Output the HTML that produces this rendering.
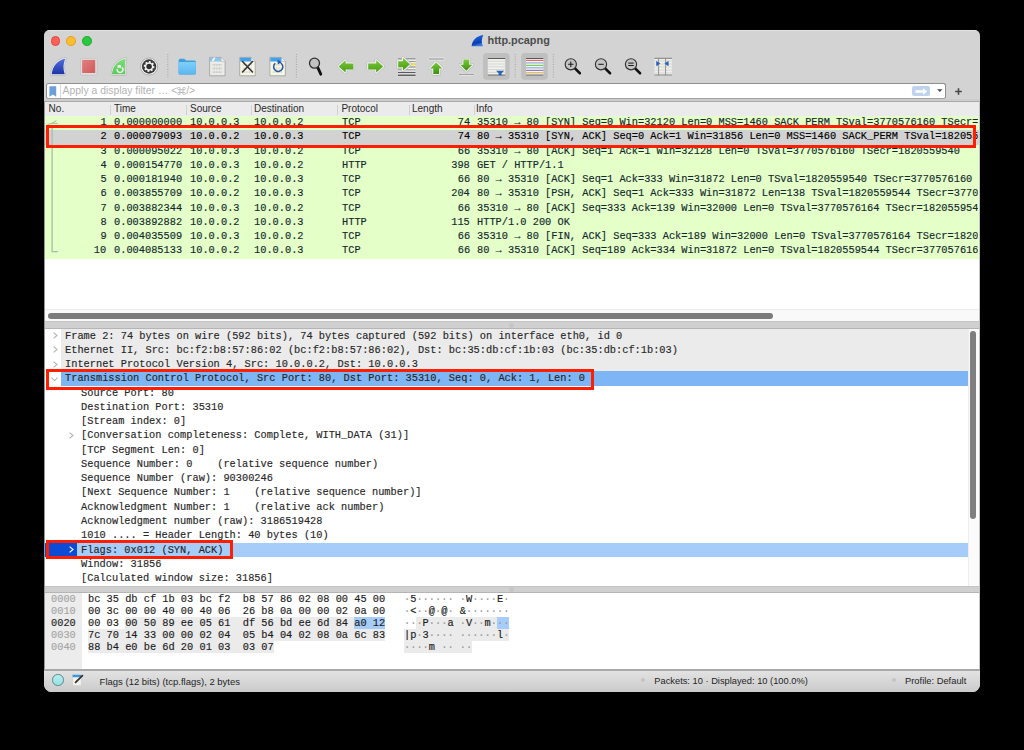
<!DOCTYPE html><html><head><meta charset="utf-8"><style>
*{margin:0;padding:0;box-sizing:border-box}
html,body{width:1024px;height:750px;background:#000;overflow:hidden}
body{position:relative;font-family:"Liberation Sans",sans-serif}
.abs{position:absolute}
#win{position:absolute;left:44px;top:30px;width:936px;height:661.5px;background:#d3d3d3;border-radius:5.5px 5.5px 7.5px 7.5px;overflow:hidden}
.mono{font-family:"Liberation Mono",monospace;font-size:11px;white-space:pre;-webkit-text-stroke-width:0.15px}
.mono span{transform:scaleX(.9379);transform-origin:0 0}
.mono span.r{transform-origin:100% 0}
.tl{position:absolute;width:9.6px;height:9.6px;border-radius:50%}
#filter{position:absolute;left:2px;top:53.2px;width:899.5px;height:15.8px;background:#fff;border:1px solid #8f8f8f;border-bottom-color:#a3a3a3;border-radius:2.5px}
#plist{position:absolute;left:0;top:71px;width:936px;height:220px;background:#fff;overflow:hidden}
#phdr{position:absolute;left:0;top:0;width:936px;height:15px;background:#ebebeb;font-size:10px;color:#2a2a2a;border-top:1px solid #a9a9a9}
#phdr span{position:absolute;top:1.3px}
#phdr i{position:absolute;top:2.5px;width:1px;height:10px;background:#d2d2d2}
.prow{position:absolute;left:0;width:936px;height:14.27px;background:#e4ffc7;color:#12272e;line-height:13.64px}
.prow span{position:absolute;top:0}
.sel{background:#d2d2d2;color:#000}
#details{position:absolute;left:0;top:298.5px;width:936px;height:257.5px;background:#fff;overflow:hidden}
.drow{position:absolute;left:0;width:923.7px;height:14.27px;line-height:14.94px;color:#262626}
.drow span{position:absolute;top:0}
.arr{position:absolute;top:0}
#hex{position:absolute;left:0;top:562.5px;width:936px;height:76.5px;background:#fff;overflow:hidden}
.hrow{position:absolute;left:0;width:936px;height:11.95px;line-height:13.64px;color:#1a1a1a}
.hrow span{position:absolute;top:0}
#status{position:absolute;left:0;top:639px;width:936px;height:22.5px;background:linear-gradient(#e2e2e2,#cbcbcb);border-top:2px solid #a9a9a9;font-size:9.35px;color:#1e1e1e}
.redbox{position:absolute;border:3.5px solid #ff1e00;border-left-width:3.1px;border-right-width:3.1px}
.splitter{position:absolute;left:0;width:936px;background:#d0d0d0;border-top:1px solid #c4c4c4;border-bottom:1px solid #b5b5b5}
</style></head><body>
<div id="win">
<div class="tl" style="left:6.7px;top:6.2px;background:#fe5f57;border:0.5px solid #e2463f"></div>
<div class="tl" style="left:22.4px;top:6.2px;background:#febc2e;border:0.5px solid #e1a116"></div>
<div class="tl" style="left:38.2px;top:6.2px;background:#28c840;border:0.5px solid #1aab29"></div>
<div class="abs" style="left:443.5px;top:3.5px;font-size:10.9px;font-weight:bold;color:#4d4d4d;letter-spacing:0px">http.pcapng</div>
<div id="filter"><div class="abs" style="left:12.5px;top:0;width:1px;height:13.8px;background:#d9d9d9"></div><svg class="abs" style="left:1.6px;top:1.8px" width="8" height="11" viewBox="0 0 8 11"><path d="M0.4 0.3 H7.2 V10.8 L3.8 8.4 L0.4 10.8 Z" fill="#6c9fda"/></svg><div class="abs" style="left:15.6px;top:1.1px;font-size:10.4px;color:#b3b3b3;white-space:pre">Apply a display filter … &lt;<svg style="display:inline-block;vertical-align:-1px" width="9" height="8" viewBox="0 0 9 8"><path d="M3 2.6 H6 V5.4 H3 Z M3 2.6 V1.4 A1.2 1.2 0 1 0 1.8 2.6 H3 M6 2.6 V1.4 A1.2 1.2 0 1 1 7.2 2.6 H6 M3 5.4 V6.6 A1.2 1.2 0 1 1 1.8 5.4 H3 M6 5.4 V6.6 A1.2 1.2 0 1 0 7.2 5.4 H6" fill="none" stroke="#b5b5b5" stroke-width="0.9"/></svg>/&gt;</div><div class="abs" style="left:864.5px;top:1.6px;width:18.6px;height:10.6px;border-radius:2px;background:#bfd4ec"></div><svg class="abs" style="left:867.5px;top:3.4px" width="13" height="7" viewBox="0 0 13 7"><path d="M0.5 2.3 H8 V0.3 L12.2 3.5 L8 6.7 V4.7 H0.5 Z" fill="#fff"/></svg><svg class="abs" style="left:890.4px;top:5.3px" width="6" height="4" viewBox="0 0 6 4"><path d="M0.4 0.3 H5.2 Q5.4 0.3 5.2 0.6 L2.8 3.1 L0.4 0.6 Q0.2 0.3 0.4 0.3 Z" fill="#4a4a4a"/></svg></div>
<svg class="abs" style="left:910.6px;top:57.7px" width="7" height="7" viewBox="0 0 7 7"><path d="M3.5 0.2 V6.8 M0.2 3.5 H6.8" stroke="#474747" stroke-width="1.6"/></svg>
<div class="abs" style="left:0;top:69px;width:936px;height:2px;background:#cdcdcd"></div>
<div id="plist"><div id="phdr">
<span style="left:4.6px">No.</span>
<i style="left:65.5px"></i>
<span style="left:70px">Time</span>
<i style="left:142px"></i>
<span style="left:146px">Source</span>
<i style="left:206.5px"></i>
<span style="left:210px">Destination</span>
<i style="left:293.3px"></i>
<span style="left:297.4px">Protocol</span>
<i style="left:365px"></i>
<span style="left:368px">Length</span>
<i style="left:429.5px"></i>
<span style="left:432px">Info</span>
</div>
<div class="prow mono" style="top:15.00px"><span class="r" style="right:873.4px">1</span><span style="left:69.8px">0.000000000</span><span style="left:146px">10.0.0.3</span><span style="left:210.3px">10.0.0.2</span><span style="left:298.2px">TCP</span><span class="r" style="right:510.2px">74</span><span style="left:433.4px;width:533.7px;overflow:hidden">35310 → 80 [SYN] Seq=0 Win=32120 Len=0 MSS=1460 SACK_PERM TSval=3770576160 TSecr=0 WS=128</span></div>
<div class="prow mono sel" style="top:29.27px"><span class="r" style="right:873.4px">2</span><span style="left:69.8px">0.000079093</span><span style="left:146px">10.0.0.2</span><span style="left:210.3px">10.0.0.3</span><span style="left:298.2px">TCP</span><span class="r" style="right:510.2px">74</span><span style="left:433.4px;width:533.7px;overflow:hidden">80 → 35310 [SYN, ACK] Seq=0 Ack=1 Win=31856 Len=0 MSS=1460 SACK_PERM TSval=1820559540 TSecr=3770576160 WS=128</span></div>
<div class="prow mono" style="top:43.54px"><span class="r" style="right:873.4px">3</span><span style="left:69.8px">0.000095022</span><span style="left:146px">10.0.0.3</span><span style="left:210.3px">10.0.0.2</span><span style="left:298.2px">TCP</span><span class="r" style="right:510.2px">66</span><span style="left:433.4px;width:533.7px;overflow:hidden">35310 → 80 [ACK] Seq=1 Ack=1 Win=32128 Len=0 TSval=3770576160 TSecr=1820559540</span></div>
<div class="prow mono" style="top:57.81px"><span class="r" style="right:873.4px">4</span><span style="left:69.8px">0.000154770</span><span style="left:146px">10.0.0.3</span><span style="left:210.3px">10.0.0.2</span><span style="left:298.2px">HTTP</span><span class="r" style="right:510.2px">398</span><span style="left:433.4px;width:533.7px;overflow:hidden">GET / HTTP/1.1</span></div>
<div class="prow mono" style="top:72.08px"><span class="r" style="right:873.4px">5</span><span style="left:69.8px">0.000181940</span><span style="left:146px">10.0.0.2</span><span style="left:210.3px">10.0.0.3</span><span style="left:298.2px">TCP</span><span class="r" style="right:510.2px">66</span><span style="left:433.4px;width:533.7px;overflow:hidden">80 → 35310 [ACK] Seq=1 Ack=333 Win=31872 Len=0 TSval=1820559540 TSecr=3770576160</span></div>
<div class="prow mono" style="top:86.35px"><span class="r" style="right:873.4px">6</span><span style="left:69.8px">0.003855709</span><span style="left:146px">10.0.0.2</span><span style="left:210.3px">10.0.0.3</span><span style="left:298.2px">TCP</span><span class="r" style="right:510.2px">204</span><span style="left:433.4px;width:533.7px;overflow:hidden">80 → 35310 [PSH, ACK] Seq=1 Ack=333 Win=31872 Len=138 TSval=1820559544 TSecr=3770576164</span></div>
<div class="prow mono" style="top:100.62px"><span class="r" style="right:873.4px">7</span><span style="left:69.8px">0.003882344</span><span style="left:146px">10.0.0.3</span><span style="left:210.3px">10.0.0.2</span><span style="left:298.2px">TCP</span><span class="r" style="right:510.2px">66</span><span style="left:433.4px;width:533.7px;overflow:hidden">35310 → 80 [ACK] Seq=333 Ack=139 Win=32000 Len=0 TSval=3770576164 TSecr=1820559544</span></div>
<div class="prow mono" style="top:114.89px"><span class="r" style="right:873.4px">8</span><span style="left:69.8px">0.003892882</span><span style="left:146px">10.0.0.2</span><span style="left:210.3px">10.0.0.3</span><span style="left:298.2px">HTTP</span><span class="r" style="right:510.2px">115</span><span style="left:433.4px;width:533.7px;overflow:hidden">HTTP/1.0 200 OK</span></div>
<div class="prow mono" style="top:129.16px"><span class="r" style="right:873.4px">9</span><span style="left:69.8px">0.004035509</span><span style="left:146px">10.0.0.3</span><span style="left:210.3px">10.0.0.2</span><span style="left:298.2px">TCP</span><span class="r" style="right:510.2px">66</span><span style="left:433.4px;width:533.7px;overflow:hidden">35310 → 80 [FIN, ACK] Seq=333 Ack=189 Win=32000 Len=0 TSval=3770576164 TSecr=1820559544</span></div>
<div class="prow mono" style="top:143.43px"><span class="r" style="right:873.4px">10</span><span style="left:69.8px">0.004085133</span><span style="left:146px">10.0.0.2</span><span style="left:210.3px">10.0.0.3</span><span style="left:298.2px">TCP</span><span class="r" style="right:510.2px">66</span><span style="left:433.4px;width:533.7px;overflow:hidden">80 → 35310 [ACK] Seq=189 Ack=334 Win=31872 Len=0 TSval=1820559544 TSecr=3770576164</span></div>
<svg class="abs" style="left:0;top:0" width="20" height="160" viewBox="0 0 20 160"><path d="M3.4 23.6 L8 22.3 L12.4 19.5 M8 22.3 H13.8" fill="none" stroke="#9fb39f" stroke-width="0.9"/><path d="M8.1 27 V150.7 H13.9" fill="none" stroke="#a9bca5" stroke-width="1.3"/></svg>
</div>
<div class="abs" style="left:0;top:279px;width:936px;height:12px;background:#f9f9f9;border-top:1px solid #ececec"></div>
<div class="abs" style="left:3.8px;top:282.7px;width:725.2px;height:6.4px;border-radius:3.2px;background:#7b7b7b"></div>
<div class="splitter" style="top:291px;height:7.6px"></div>
<div id="details">
<div class="drow mono" style="top:0.00px;background:linear-gradient(90deg,#fff 17px,#ebebeb 17px)">
<span style="left:21.4px">Frame 2: 74 bytes on wire (592 bits), 74 bytes captured (592 bits) on interface eth0, id 0</span>
<svg class="arr" style="left:9.2px;top:3.6px" width="5" height="7" viewBox="0 0 5 7"><path d="M0.6 0.6 L4 3.5 L0.6 6.4" fill="none" stroke="#b3b3b3" stroke-width="1.1"/></svg>
</div>
<div class="drow mono" style="top:14.27px;background:linear-gradient(90deg,#fff 17px,#ebebeb 17px)">
<span style="left:21.4px">Ethernet II, Src: bc:f2:b8:57:86:02 (bc:f2:b8:57:86:02), Dst: bc:35:db:cf:1b:03 (bc:35:db:cf:1b:03)</span>
<svg class="arr" style="left:9.2px;top:3.6px" width="5" height="7" viewBox="0 0 5 7"><path d="M0.6 0.6 L4 3.5 L0.6 6.4" fill="none" stroke="#b3b3b3" stroke-width="1.1"/></svg>
</div>
<div class="drow mono" style="top:28.54px;background:linear-gradient(90deg,#fff 17px,#ebebeb 17px)">
<span style="left:21.4px">Internet Protocol Version 4, Src: 10.0.0.2, Dst: 10.0.0.3</span>
<svg class="arr" style="left:9.2px;top:3.6px" width="5" height="7" viewBox="0 0 5 7"><path d="M0.6 0.6 L4 3.5 L0.6 6.4" fill="none" stroke="#b3b3b3" stroke-width="1.1"/></svg>
</div>
<div class="drow mono" style="top:42.81px;background:linear-gradient(90deg,#fff 17px,#7db5f5 17px)">
<span style="left:21.4px">Transmission Control Protocol, Src Port: 80, Dst Port: 35310, Seq: 0, Ack: 1, Len: 0</span>
<svg class="arr" style="left:7.2px;top:5.6px" width="7" height="4.5" viewBox="0 0 7 4.5"><path d="M0.5 0.6 L3.5 3.6 L6.5 0.6" fill="none" stroke="#b3b3b3" stroke-width="1.1"/></svg>
</div>
<div class="drow mono" style="top:57.08px;">
<span style="left:37.4px">Source Port: 80</span>
</div>
<div class="drow mono" style="top:71.35px;">
<span style="left:37.4px">Destination Port: 35310</span>
</div>
<div class="drow mono" style="top:85.62px;">
<span style="left:37.4px">[Stream index: 0]</span>
</div>
<div class="drow mono" style="top:99.89px;">
<span style="left:37.4px">[Conversation completeness: Complete, WITH_DATA (31)]</span>
<svg class="arr" style="left:25.2px;top:3.6px" width="5" height="7" viewBox="0 0 5 7"><path d="M0.6 0.6 L4 3.5 L0.6 6.4" fill="none" stroke="#b3b3b3" stroke-width="1.1"/></svg>
</div>
<div class="drow mono" style="top:114.16px;">
<span style="left:37.4px">[TCP Segment Len: 0]</span>
</div>
<div class="drow mono" style="top:128.43px;">
<span style="left:37.4px">Sequence Number: 0    (relative sequence number)</span>
</div>
<div class="drow mono" style="top:142.70px;">
<span style="left:37.4px">Sequence Number (raw): 90300246</span>
</div>
<div class="drow mono" style="top:156.97px;">
<span style="left:37.4px">[Next Sequence Number: 1    (relative sequence number)]</span>
</div>
<div class="drow mono" style="top:171.24px;">
<span style="left:37.4px">Acknowledgment Number: 1    (relative ack number)</span>
</div>
<div class="drow mono" style="top:185.51px;">
<span style="left:37.4px">Acknowledgment number (raw): 3186519428</span>
</div>
<div class="drow mono" style="top:199.78px;">
<span style="left:37.4px">1010 .... = Header Length: 40 bytes (10)</span>
</div>
<div class="drow mono" style="top:214.05px;background:linear-gradient(90deg,#0b4bd6 32.9px,#a6cdfa 32.9px)">
<span style="left:37.4px">Flags: 0x012 (SYN, ACK)</span>
<svg class="arr" style="left:25.2px;top:3.6px" width="5" height="7" viewBox="0 0 5 7"><path d="M0.6 0.6 L4 3.5 L0.6 6.4" fill="none" stroke="#fff" stroke-width="1.1"/></svg>
</div>
<div class="drow mono" style="top:228.32px;">
<span style="left:37.4px">Window: 31856</span>
</div>
<div class="drow mono" style="top:242.59px;">
<span style="left:37.4px">[Calculated window size: 31856]</span>
</div>
<div class="abs" style="left:923.7px;top:0;width:12.3px;height:257.5px;background:#fbfbfb;border-left:1px solid #ededed"></div>
<div class="abs" style="left:926.1px;top:2.4px;width:5.9px;height:188.2px;border-radius:3px;background:#7f7f7f"></div>
</div>
<div class="splitter" style="top:556px;height:6.5px"></div>
<div id="hex">
<div class="abs" style="left:0;top:0;width:38px;height:76.5px;background:#ececec"></div>
<div class="abs" style="left:81.14px;top:24.40px;width:259.98px;height:11.95px;background:#ebebeb"></div>
<div class="abs" style="left:44.00px;top:36.35px;width:297.12px;height:11.95px;background:#ebebeb"></div>
<div class="abs" style="left:44.00px;top:48.30px;width:185.70px;height:11.95px;background:#ebebeb"></div>
<div class="abs" style="left:310.17px;top:24.40px;width:30.95px;height:11.95px;background:#a6cdfa"></div>
<div class="abs" style="left:372.07px;top:24.40px;width:92.85px;height:11.95px;background:#ebebeb"></div>
<div class="abs" style="left:359.69px;top:36.35px;width:105.23px;height:11.95px;background:#ebebeb"></div>
<div class="abs" style="left:359.69px;top:48.30px;width:68.09px;height:11.95px;background:#ebebeb"></div>
<div class="abs" style="left:452.54px;top:24.40px;width:12.38px;height:11.95px;background:#a6cdfa"></div>
<div class="hrow mono" style="top:0.50px">
<span style="left:6.6px;color:#a6a6a6">0000</span>
<span style="left:44.0px">bc 35 db cf 1b 03 bc f2  b8 57 86 02 08 00 45 00</span>
<span style="left:359.69px"><b style="font-weight:normal;color:#9a9a9a">·</b>5<b style="font-weight:normal;color:#9a9a9a">·</b><b style="font-weight:normal;color:#9a9a9a">·</b><b style="font-weight:normal;color:#9a9a9a">·</b><b style="font-weight:normal;color:#9a9a9a">·</b><b style="font-weight:normal;color:#9a9a9a">·</b><b style="font-weight:normal;color:#9a9a9a">·</b> <b style="font-weight:normal;color:#9a9a9a">·</b>W<b style="font-weight:normal;color:#9a9a9a">·</b><b style="font-weight:normal;color:#9a9a9a">·</b><b style="font-weight:normal;color:#9a9a9a">·</b><b style="font-weight:normal;color:#9a9a9a">·</b>E<b style="font-weight:normal;color:#9a9a9a">·</b></span>
</div>
<div class="hrow mono" style="top:12.45px">
<span style="left:6.6px;color:#a6a6a6">0010</span>
<span style="left:44.0px">00 3c 00 00 40 00 40 06  26 b8 0a 00 00 02 0a 00</span>
<span style="left:359.69px"><b style="font-weight:normal;color:#9a9a9a">·</b>&lt;<b style="font-weight:normal;color:#9a9a9a">·</b><b style="font-weight:normal;color:#9a9a9a">·</b>@<b style="font-weight:normal;color:#9a9a9a">·</b>@<b style="font-weight:normal;color:#9a9a9a">·</b> &amp;<b style="font-weight:normal;color:#9a9a9a">·</b><b style="font-weight:normal;color:#9a9a9a">·</b><b style="font-weight:normal;color:#9a9a9a">·</b><b style="font-weight:normal;color:#9a9a9a">·</b><b style="font-weight:normal;color:#9a9a9a">·</b><b style="font-weight:normal;color:#9a9a9a">·</b><b style="font-weight:normal;color:#9a9a9a">·</b></span>
</div>
<div class="hrow mono" style="top:24.40px">
<span style="left:6.6px;color:#1f1f1f">0020</span>
<span style="left:44.0px">00 03 00 50 89 ee 05 61  df 56 bd ee 6d 84 a0 12</span>
<span style="left:359.69px"><b style="font-weight:normal;color:#9a9a9a">·</b><b style="font-weight:normal;color:#9a9a9a">·</b><b style="font-weight:normal;color:#9a9a9a">·</b>P<b style="font-weight:normal;color:#9a9a9a">·</b><b style="font-weight:normal;color:#9a9a9a">·</b><b style="font-weight:normal;color:#9a9a9a">·</b>a <b style="font-weight:normal;color:#9a9a9a">·</b>V<b style="font-weight:normal;color:#9a9a9a">·</b><b style="font-weight:normal;color:#9a9a9a">·</b>m<b style="font-weight:normal;color:#9a9a9a">·</b><b style="font-weight:normal;color:#9a9a9a">·</b><b style="font-weight:normal;color:#9a9a9a">·</b></span>
</div>
<div class="hrow mono" style="top:36.35px">
<span style="left:6.6px;color:#a6a6a6">0030</span>
<span style="left:44.0px">7c 70 14 33 00 00 02 04  05 b4 04 02 08 0a 6c 83</span>
<span style="left:359.69px">|p<b style="font-weight:normal;color:#9a9a9a">·</b>3<b style="font-weight:normal;color:#9a9a9a">·</b><b style="font-weight:normal;color:#9a9a9a">·</b><b style="font-weight:normal;color:#9a9a9a">·</b><b style="font-weight:normal;color:#9a9a9a">·</b> <b style="font-weight:normal;color:#9a9a9a">·</b><b style="font-weight:normal;color:#9a9a9a">·</b><b style="font-weight:normal;color:#9a9a9a">·</b><b style="font-weight:normal;color:#9a9a9a">·</b><b style="font-weight:normal;color:#9a9a9a">·</b><b style="font-weight:normal;color:#9a9a9a">·</b>l<b style="font-weight:normal;color:#9a9a9a">·</b></span>
</div>
<div class="hrow mono" style="top:48.30px">
<span style="left:6.6px;color:#a6a6a6">0040</span>
<span style="left:44.0px">88 b4 e0 be 6d 20 01 03  03 07</span>
<span style="left:359.69px"><b style="font-weight:normal;color:#9a9a9a">·</b><b style="font-weight:normal;color:#9a9a9a">·</b><b style="font-weight:normal;color:#9a9a9a">·</b><b style="font-weight:normal;color:#9a9a9a">·</b>m <b style="font-weight:normal;color:#9a9a9a">·</b><b style="font-weight:normal;color:#9a9a9a">·</b> <b style="font-weight:normal;color:#9a9a9a">·</b><b style="font-weight:normal;color:#9a9a9a">·</b></span>
</div>
</div>
<div id="status">
<div class="abs" style="left:8.1px;top:3.3px;width:11.5px;height:11.5px;border-radius:50%;background:linear-gradient(#b9eef0,#96e0e3);border:0.8px solid #5c898b"></div>
<svg class="abs" style="left:28px;top:2.5px" width="12" height="12" viewBox="0 0 12 12"><rect x="0.6" y="0.8" width="8.6" height="11" fill="#f2f2ea" stroke="#c8c8c8" stroke-width="0.5"/><rect x="0.6" y="0.8" width="8.6" height="2.4" fill="#3a98dc"/><path d="M3.6 8.4 L10.4 1.6" stroke="#333" stroke-width="1.8" stroke-linecap="round"/></svg>
<div class="abs" style="left:55.6px;top:4.6px;white-space:pre;font-size:9.5px">Flags (12 bits) (tcp.flags), 2 bytes</div>
<div class="abs" style="left:596.5px;top:7.3px;width:4px;height:4px;border-radius:50%;background:#c4c4c4"></div>
<div class="abs" style="left:610.3px;top:4.6px;white-space:pre;font-size:9.3px">Packets: 10 · Displayed: 10 (100.0%)</div>
<div class="abs" style="left:847.5px;top:7.3px;width:4px;height:4px;border-radius:50%;background:#c4c4c4"></div>
<div class="abs" style="left:861px;top:4.6px;white-space:pre">Profile: Default</div>
</div>
<div class="abs" style="left:0;top:71px;width:0.9px;height:568px;background:#979797"></div>
<div class="abs" style="left:935px;top:71px;width:1px;height:568px;background:#c4c4c4"></div>
<div class="abs" style="left:0;top:0;width:936px;height:1px;background:#e4e4e4"></div>
<div class="abs" style="left:464.5px;top:292.5px;width:5px;height:5px;border-radius:50%;background:#c6c6c6"></div>
<div class="abs" style="left:464.5px;top:556.8px;width:5px;height:5px;border-radius:50%;background:#c6c6c6"></div>
</div>
<svg class="abs" style="left:0;top:0" width="1024" height="100" viewBox="0 0 1024 100">
<defs><linearGradient id="bf" x1="0" y1="0" x2="0" y2="1"><stop offset="0" stop-color="#5470dc"/><stop offset="1" stop-color="#1b33a8"/></linearGradient><linearGradient id="rf" x1="0" y1="0" x2="1" y2="1"><stop offset="0" stop-color="#e28080"/><stop offset="1" stop-color="#d05a5a"/></linearGradient><linearGradient id="gf" x1="0" y1="0" x2="0" y2="1"><stop offset="0" stop-color="#7ede7a"/><stop offset="1" stop-color="#5cc85a"/></linearGradient><linearGradient id="gg" x1="0" y1="0" x2="0" y2="1"><stop offset="0" stop-color="#78c83a"/><stop offset="1" stop-color="#4a9c12"/></linearGradient><linearGradient id="gg2" x1="0" y1="0" x2="0" y2="1"><stop offset="0" stop-color="#7acb3c"/><stop offset="1" stop-color="#3f8e0e"/></linearGradient><linearGradient id="fo" x1="0" y1="0" x2="0" y2="1"><stop offset="0" stop-color="#7fd0fa"/><stop offset="1" stop-color="#5ab6ee"/></linearGradient><linearGradient id="sf" x1="0" y1="0" x2="0.3" y2="1"><stop offset="0" stop-color="#1f6ef0"/><stop offset="0.8" stop-color="#0a3fb0"/><stop offset="1" stop-color="#3f78e0"/></linearGradient></defs>
<path d="M51.7 74.3 C52.5 66 57 60.5 65.3 58.4 C63 63.5 63 69 64.8 74.3 Z" fill="#efefef" stroke="#bdbdbd" stroke-width="2.8" stroke-linejoin="round"/>
<path d="M51.7 74.3 C52.5 66 57 60.5 65.3 58.4 C63 63.5 63 69 64.8 74.3 Z" fill="#f4f4f4" stroke="#f4f4f4" stroke-width="1.2" stroke-linejoin="round"/>
<path d="M51.7 74.3 C52.5 66 57 60.5 65.3 58.4 C63 63.5 63 69 64.8 74.3 Z" fill="url(#bf)"/>
<rect x="80.6" y="58.3" width="16.6" height="16.9" rx="1" fill="#dedede" stroke="#c2c2c2" stroke-width="0.8"/>
<rect x="82.1" y="59.9" width="13.1" height="13.1" fill="url(#rf)"/>
<path d="M111.9 74.3 C112.8 66 117 60.5 125.8 58.4 C124.6 63.5 124.6 69 125.3 74.3 Z" fill="#ededed" stroke="#bcbcbc" stroke-width="2.8" stroke-linejoin="round"/>
<path d="M111.9 74.3 C112.8 66 117 60.5 125.8 58.4 C124.6 63.5 124.6 69 125.3 74.3 Z" fill="#f2f2f2" stroke="#f2f2f2" stroke-width="1.1" stroke-linejoin="round"/>
<path d="M111.9 74.3 C112.8 66 117 60.5 125.8 58.4 C124.6 63.5 124.6 69 125.3 74.3 Z" fill="url(#gf)"/>
<path d="M117.2 69.2 A2.9 2.9 0 1 0 121.8 67.3" fill="none" stroke="#e9f3e9" stroke-width="1.5"/>
<path d="M117.6 64.9 H120.9 V68.6 L119.3 67.6 L117.6 68.6 Z" fill="#ecefec"/>
<circle cx="149.1" cy="66.5" r="8.6" fill="#f2f2f2" stroke="#a5a5a5" stroke-width="0.8"/>
<circle cx="149.1" cy="66.5" r="7.2" fill="#3a3a3a"/>
<path d="M154.50 66.39 L154.23 68.20 L152.84 68.17 L152.33 69.03 L152.99 70.24 L151.52 71.33 L150.57 70.33 L149.59 70.57 L149.21 71.90 L147.40 71.63 L147.43 70.24 L146.57 69.73 L145.36 70.39 L144.27 68.92 L145.27 67.97 L145.03 66.99 L143.70 66.61 L143.97 64.80 L145.36 64.83 L145.87 63.97 L145.21 62.76 L146.68 61.67 L147.63 62.67 L148.61 62.43 L148.99 61.10 L150.80 61.37 L150.77 62.76 L151.63 63.27 L152.84 62.61 L153.93 64.08 L152.93 65.03 L153.17 66.01 Z" fill="#f4f4f4"/>
<circle cx="149.1" cy="66.5" r="2.75" fill="#2e2e2e"/>
<line x1="167.8" y1="54" x2="167.8" y2="79" stroke="#9a9a9a" stroke-width="0.8" stroke-dasharray="1 1.5"/>
<path d="M178.6 60.6 Q178.6 58.8 180.3 58.8 H184.3 L186 60.6 H194.3 Q195.8 60.6 195.8 62 V73 Q195.8 74.6 194.3 74.6 H180.1 Q178.6 74.6 178.6 73 Z" fill="#3c9fe0"/>
<path d="M178.6 63 Q178.6 62 179.8 62 H194.6 Q195.8 62 195.8 63 V73 Q195.8 74.6 194.3 74.6 H180.1 Q178.6 74.6 178.6 73 Z" fill="url(#fo)"/>
<path d="M209.6 57.4 H221.1 L225.1 61.4 V75.8 H209.6 Z" fill="#ebebe8" stroke="#9d9d9d" stroke-width="0.8"/><path d="M210.0 57.8 H221.1 L224.7 61.4 H210.0 Z" fill="#8cc6ec"/><path d="M221.1 57.4 V61.4 H225.1" fill="#f4f4f4" stroke="#b0b0b0" stroke-width="0.5"/><line x1="212.6" y1="64.9" x2="222.1" y2="64.9" stroke="#c6c6c2" stroke-width="1.8" stroke-dasharray="1 0.6"/><line x1="212.6" y1="68.5" x2="222.1" y2="68.5" stroke="#c6c6c2" stroke-width="1.8" stroke-dasharray="1 0.6"/><line x1="212.6" y1="72.10000000000001" x2="222.1" y2="72.10000000000001" stroke="#c6c6c2" stroke-width="1.8" stroke-dasharray="1 0.6"/>
<path d="M213.5 57.6 L211.6 61.2 H213.8 L215.4 57.6 Z" fill="#f4f4f4"/>
<path d="M239.7 57.4 H251.2 L255.2 61.4 V75.8 H239.7 Z" fill="#f6f6e6" stroke="#9d9d9d" stroke-width="0.8"/><path d="M240.1 57.8 H251.2 L254.79999999999998 61.4 H240.1 Z" fill="#3fa2ea"/><path d="M251.2 57.4 V61.4 H255.2" fill="#f4f4f4" stroke="#b0b0b0" stroke-width="0.5"/><line x1="242.7" y1="64.9" x2="252.2" y2="64.9" stroke="#d6d6cc" stroke-width="1.8" stroke-dasharray="1 0.6"/><line x1="242.7" y1="68.5" x2="252.2" y2="68.5" stroke="#d6d6cc" stroke-width="1.8" stroke-dasharray="1 0.6"/><line x1="242.7" y1="72.10000000000001" x2="252.2" y2="72.10000000000001" stroke="#d6d6cc" stroke-width="1.8" stroke-dasharray="1 0.6"/>
<path d="M242.5 61.5 L252.5 72 M252.5 61.5 L242.5 72" stroke="#333" stroke-width="1.6" stroke-linecap="round"/>
<path d="M269.9 57.4 H281.4 L285.4 61.4 V75.8 H269.9 Z" fill="#f6f6e6" stroke="#9d9d9d" stroke-width="0.8"/><path d="M270.29999999999995 57.8 H281.4 L285.0 61.4 H270.29999999999995 Z" fill="#3fa2ea"/><path d="M281.4 57.4 V61.4 H285.4" fill="#f4f4f4" stroke="#b0b0b0" stroke-width="0.5"/><line x1="272.9" y1="64.9" x2="282.4" y2="64.9" stroke="#d6d6cc" stroke-width="1.8" stroke-dasharray="1 0.6"/><line x1="272.9" y1="68.5" x2="282.4" y2="68.5" stroke="#d6d6cc" stroke-width="1.8" stroke-dasharray="1 0.6"/><line x1="272.9" y1="72.10000000000001" x2="282.4" y2="72.10000000000001" stroke="#d6d6cc" stroke-width="1.8" stroke-dasharray="1 0.6"/>
<path d="M275.3 63.3 A4.6 4.6 0 1 0 279.6 62.4" fill="none" stroke="#2a55a0" stroke-width="1.5"/>
<path d="M277.4 59.8 L281.6 62.0 L277.8 64.6 Z" fill="#2a55a0"/>
<line x1="296.4" y1="54" x2="296.4" y2="79" stroke="#9a9a9a" stroke-width="0.8" stroke-dasharray="1 1.5"/>
<line x1="317.6" y1="67.2" x2="320.8" y2="74.2" stroke="#111" stroke-width="2.8" stroke-linecap="round"/>
<circle cx="314.5" cy="63.2" r="5" fill="#c2c2c2" stroke="#2e2e2e" stroke-width="1.3"/>
<path d="M338.6 66.4 L345.6 60.2 V63.400000000000006 H353.4 V69.4 H345.6 V72.60000000000001 Z" fill="#b9b9b9" stroke="#b9b9b9" stroke-width="3.4" stroke-linejoin="round"/><path d="M338.6 66.4 L345.6 60.2 V63.400000000000006 H353.4 V69.4 H345.6 V72.60000000000001 Z" fill="#efefef" stroke="#efefef" stroke-width="2.2" stroke-linejoin="round"/><path d="M338.6 66.4 L345.6 60.2 V63.400000000000006 H353.4 V69.4 H345.6 V72.60000000000001 Z" fill="url(#gg)" stroke="none"/>
<path d="M383.2 66.4 L376.2 60.2 V63.400000000000006 H368.2 V69.4 H376.2 V72.60000000000001 Z" fill="#b9b9b9" stroke="#b9b9b9" stroke-width="3.4" stroke-linejoin="round"/><path d="M383.2 66.4 L376.2 60.2 V63.400000000000006 H368.2 V69.4 H376.2 V72.60000000000001 Z" fill="#efefef" stroke="#efefef" stroke-width="2.2" stroke-linejoin="round"/><path d="M383.2 66.4 L376.2 60.2 V63.400000000000006 H368.2 V69.4 H376.2 V72.60000000000001 Z" fill="url(#gg)" stroke="none"/>
<rect x="398" y="58.2" width="17.6" height="18" fill="#f4f4f4"/>
<line x1="398" y1="58.8" x2="415.6" y2="58.8" stroke="#8a8a8a" stroke-width="1.2"/>
<line x1="398" y1="61.5" x2="415.6" y2="61.5" stroke="#9a9a9a" stroke-width="1.2"/>
<line x1="398" y1="64.2" x2="415.6" y2="64.2" stroke="#9a9a9a" stroke-width="1.2"/>
<line x1="398" y1="67.0" x2="415.6" y2="67.0" stroke="#8a8a8a" stroke-width="1.2"/>
<line x1="398" y1="69.8" x2="415.6" y2="69.8" stroke="#9a9a9a" stroke-width="1.2"/>
<line x1="398" y1="72.5" x2="415.6" y2="72.5" stroke="#5a5a5a" stroke-width="1.3"/>
<line x1="398" y1="75.2" x2="415.6" y2="75.2" stroke="#444" stroke-width="1.3"/>
<rect x="411" y="63.3" width="4.6" height="2.2" fill="#f2e04a"/>
<path d="M410.0 64.2 L403.0 58.0 V61.2 H398.2 V67.2 H403.0 V70.4 Z" fill="#b9b9b9" stroke="#b9b9b9" stroke-width="3.4" stroke-linejoin="round"/><path d="M410.0 64.2 L403.0 58.0 V61.2 H398.2 V67.2 H403.0 V70.4 Z" fill="#efefef" stroke="#efefef" stroke-width="2.2" stroke-linejoin="round"/><path d="M410.0 64.2 L403.0 58.0 V61.2 H398.2 V67.2 H403.0 V70.4 Z" fill="url(#gg)" stroke="none"/>
<rect x="428.0" y="57.9" width="16.4" height="2.2" rx="1.1" fill="#a2a2a2" stroke="#ececec" stroke-width="0.8"/>
<path d="M436.2 62.4 L442.2 68.4 H439.09999999999997 V74.0 H433.3 V68.4 H430.2 Z" fill="#b9b9b9" stroke="#b9b9b9" stroke-width="3.4" stroke-linejoin="round"/><path d="M436.2 62.4 L442.2 68.4 H439.09999999999997 V74.0 H433.3 V68.4 H430.2 Z" fill="#efefef" stroke="#efefef" stroke-width="2.2" stroke-linejoin="round"/><path d="M436.2 62.4 L442.2 68.4 H439.09999999999997 V74.0 H433.3 V68.4 H430.2 Z" fill="url(#gg2)"/>
<path d="M466.3 70.8 L472.3 64.8 H469.2 V59.6 H463.40000000000003 V64.8 H460.3 Z" fill="#b9b9b9" stroke="#b9b9b9" stroke-width="3.4" stroke-linejoin="round"/><path d="M466.3 70.8 L472.3 64.8 H469.2 V59.6 H463.40000000000003 V64.8 H460.3 Z" fill="#efefef" stroke="#efefef" stroke-width="2.2" stroke-linejoin="round"/><path d="M466.3 70.8 L472.3 64.8 H469.2 V59.6 H463.40000000000003 V64.8 H460.3 Z" fill="url(#gg2)"/>
<rect x="458.3" y="73.3" width="16.2" height="2.2" rx="1.1" fill="#a2a2a2" stroke="#ececec" stroke-width="0.8"/>
<rect x="483.1" y="53.1" width="26.6" height="26.6" rx="3.5" fill="#bfbfbf"/>
<rect x="487.8" y="58" width="17.4" height="17.6" fill="#f0f0ee"/>
<line x1="487.8" y1="61.2" x2="505.2" y2="61.2" stroke="#d2d2ce" stroke-width="0.9"/>
<line x1="487.8" y1="64.0" x2="505.2" y2="64.0" stroke="#d2d2ce" stroke-width="0.9"/>
<line x1="487.8" y1="66.8" x2="505.2" y2="66.8" stroke="#d2d2ce" stroke-width="0.9"/>
<line x1="487.8" y1="69.6" x2="505.2" y2="69.6" stroke="#d2d2ce" stroke-width="0.9"/>
<line x1="487.8" y1="72.4" x2="505.2" y2="72.4" stroke="#d2d2ce" stroke-width="0.9"/>
<line x1="487.8" y1="58.5" x2="505.2" y2="58.5" stroke="#5a5a5a" stroke-width="1"/>
<line x1="487.8" y1="75.1" x2="505.2" y2="75.1" stroke="#7a7a7a" stroke-width="1.3"/>
<path d="M496 70.7 H504.2 L501.6 73.2 V75.2 H498.6 V73.2 Z" fill="#2e62b8"/>
<line x1="515.2" y1="54" x2="515.2" y2="79" stroke="#9a9a9a" stroke-width="0.8" stroke-dasharray="1 1.5"/>
<rect x="521.2" y="53.1" width="26.6" height="26.6" rx="3.5" fill="#bfbfbf"/>
<rect x="526" y="58" width="17.4" height="17.6" fill="#f4f4f4"/>
<line x1="526" y1="58.5" x2="543.4" y2="58.5" stroke="#5a5a5a" stroke-width="1"/>
<line x1="526" y1="60.4" x2="543.4" y2="60.4" stroke="#e86a6a" stroke-width="1.2"/>
<line x1="526" y1="62.9" x2="543.4" y2="62.9" stroke="#8fb0d8" stroke-width="1.2"/>
<line x1="526" y1="65.4" x2="543.4" y2="65.4" stroke="#78d050" stroke-width="1.2"/>
<line x1="526" y1="67.8" x2="543.4" y2="67.8" stroke="#8fb0d8" stroke-width="1.2"/>
<line x1="526" y1="70.4" x2="543.4" y2="70.4" stroke="#9a78b0" stroke-width="1.2"/>
<line x1="526" y1="72.8" x2="543.4" y2="72.8" stroke="#d8b850" stroke-width="1.2"/>
<line x1="526" y1="75.1" x2="543.4" y2="75.1" stroke="#7a7a7a" stroke-width="1.3"/>
<line x1="553.4" y1="54" x2="553.4" y2="79" stroke="#9a9a9a" stroke-width="0.8" stroke-dasharray="1 1.5"/>
<line x1="574.4399999999999" y1="67.94" x2="579.872" y2="73.25999999999999" stroke="#111" stroke-width="2.5" stroke-linecap="round"/><circle cx="570.8" cy="64.3" r="5.6" fill="#c4c4c4" stroke="#333" stroke-width="1.15"/><path d="M568.0999999999999 64.3 H573.5 M570.8 61.599999999999994 V67.0" stroke="#1a1a1a" stroke-width="1.05"/>
<line x1="604.64" y1="67.94" x2="610.072" y2="73.25999999999999" stroke="#111" stroke-width="2.5" stroke-linecap="round"/><circle cx="601.0" cy="64.3" r="5.6" fill="#c4c4c4" stroke="#333" stroke-width="1.15"/><path d="M598.3 64.3 H603.7" stroke="#1a1a1a" stroke-width="1.05"/>
<line x1="634.64" y1="67.94" x2="640.072" y2="73.25999999999999" stroke="#111" stroke-width="2.5" stroke-linecap="round"/><circle cx="631.0" cy="64.3" r="5.6" fill="#c4c4c4" stroke="#333" stroke-width="1.15"/><path d="M628.3 63.099999999999994 H633.7 M628.3 65.5 H633.7" stroke="#1a1a1a" stroke-width="1.0"/>
<rect x="654.4" y="58" width="17.6" height="17.4" fill="#eeeeea"/>
<line x1="654.4" y1="61" x2="672" y2="61" stroke="#d4d4d0" stroke-width="0.9"/>
<line x1="654.4" y1="64" x2="672" y2="64" stroke="#d4d4d0" stroke-width="0.9"/>
<line x1="654.4" y1="67" x2="672" y2="67" stroke="#d4d4d0" stroke-width="0.9"/>
<line x1="654.4" y1="70" x2="672" y2="70" stroke="#d4d4d0" stroke-width="0.9"/>
<line x1="654.4" y1="73" x2="672" y2="73" stroke="#d4d4d0" stroke-width="0.9"/>
<line x1="654.4" y1="58.3" x2="672" y2="58.3" stroke="#707070" stroke-width="0.9"/>
<line x1="654.4" y1="75.0" x2="672" y2="75.0" stroke="#8a8a8a" stroke-width="1.1"/>
<line x1="658.6" y1="58" x2="658.6" y2="75.4" stroke="#8a8a8a" stroke-width="0.9"/>
<line x1="665.6" y1="58" x2="665.6" y2="75.4" stroke="#8a8a8a" stroke-width="0.9"/>
<path d="M656.2 61.0 Q657 61 660.4 63.5 Q657 66 656.2 66 Z" fill="#2e62c0"/>
<path d="M668.6 61.0 Q667.8 61 664.4 63.5 Q667.8 66 668.6 66 Z" fill="#2e62c0"/>
<path d="M471.6 46.2 C472.2 40.5 475.8 36.3 483.4 35 C481.4 38.6 481.3 42.5 482.9 46.2 Z" fill="url(#sf)"/>
</svg>
<div class="redbox" style="left:46px;top:125.2px;width:930.4px;height:22.6px"></div>
<div class="redbox" style="left:46px;top:369px;width:548px;height:20.5px"></div>
<div class="redbox" style="left:46.2px;top:539.8px;width:187px;height:19.6px"></div>
</body></html>
